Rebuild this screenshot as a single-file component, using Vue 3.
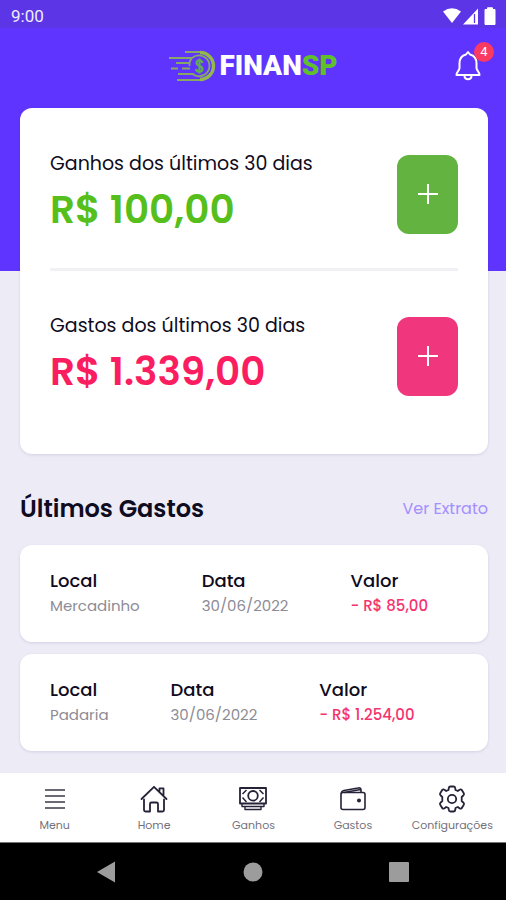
<script setup>
const totals = [
  { id: 'ganhos', label: 'Ganhos dos últimos 30 dias', amount: 'R$ 100,00', kind: 'income', action: 'Adicionar ganho' },
  { id: 'gastos', label: 'Gastos dos últimos 30 dias', amount: 'R$ 1.339,00', kind: 'expense', action: 'Adicionar gasto' },
]

const expenses = [
  { place: 'Mercadinho', date: '30/06/2022', value: '- R$ 85,00' },
  { place: 'Padaria', date: '30/06/2022', value: '- R$ 1.254,00' },
]
</script>

<template>
  <div class="screen">
    <div class="status-bar">
      <span class="clock">9:00</span>
      <svg class="status-icons" viewBox="0 0 56 18" aria-hidden="true">
        <path d="M1 4.500Q10 -2 19 4.500L10 16Z" fill="#fff" />
        <path d="M21 17.500L36 1.500V17.500Z" fill="#fff" />
        <path d="M32.500 7V16" stroke="#5c35e6" stroke-width="1.300" />
        <path d="M45.500 2.500V0.800H50.500V2.500H53V17.500H43V2.500Z" fill="#fff" stroke="#fff" stroke-linejoin="round" />
      </svg>
    </div>

    <header class="top-bar">
      <div class="brand">
        <svg class="coin" viewBox="0 0 48 32" fill="none" stroke="#86a765" stroke-width="1.800" aria-hidden="true">
          <path d="M17 2H33M1 8H24M8 13H22M3 18.500H10M14 18.500H22M10 24H26M9 30H33" />
          <path d="M32 2.500A13.500 13.500 0 0 1 32 29.500" stroke="#93b84d" stroke-width="3.400" />
          <path d="M24 8A10.500 10.500 0 1 1 24.500 24" />
          <path d="M24 8Q21 11 21.500 16" />
          <path d="M34.500 13C34 9.500 28.500 9.500 28.500 12.800C28.500 16.300 34.500 15.300 34.500 19C34.500 22.500 28.500 22.500 28 19M31.500 8.500V23.500" stroke="#62ad50" stroke-width="2.200" />
        </svg>
        <span class="brand-name">FINAN<span class="brand-accent">SP</span></span>
      </div>
      <button class="bell" type="button" aria-label="Notificações">
        <svg viewBox="0 0 28 32" fill="none" stroke="#fff" stroke-width="2" stroke-linejoin="round" stroke-linecap="round" aria-hidden="true">
          <path d="M14 2L12 4.500C8 5.500 5.500 9 5.500 13.500V18C5.500 20.500 2.500 22 2.500 25H25.500C25.500 22 22.500 20.500 22.500 18V13.500C22.500 9 20 5.500 16 4.500Z" />
          <path d="M10.500 25.500C10.500 30.500 17.500 30.500 17.500 25.500" />
        </svg>
        <span class="badge">4</span>
      </button>
    </header>

    <main class="content">
      <section class="card summary">
        <div v-for="total in totals" :key="total.id" class="total" :class="total.kind">
          <div>
            <p class="total-label">{{ total.label }}</p>
            <p class="total-amount">{{ total.amount }}</p>
          </div>
          <button class="add" type="button" :aria-label="total.action">
            <svg viewBox="0 0 22 22" stroke="#fff" stroke-width="2" aria-hidden="true">
              <path d="M11 1V21M1 11H21" />
            </svg>
          </button>
        </div>
      </section>

      <div class="section-head">
        <h2>Últimos Gastos</h2>
        <a href="#extrato">Ver Extrato</a>
      </div>

      <ul class="expenses">
        <li v-for="expense in expenses" :key="expense.place" class="card">
          <dl class="expense-row">
            <div>
              <dt>Local</dt>
              <dd>{{ expense.place }}</dd>
            </div>
            <div>
              <dt>Data</dt>
              <dd>{{ expense.date }}</dd>
            </div>
            <div>
              <dt>Valor</dt>
              <dd class="negative">{{ expense.value }}</dd>
            </div>
          </dl>
        </li>
      </ul>
    </main>

    <nav class="tabs">
      <a href="#menu">
        <svg viewBox="0 0 28 28" fill="none" stroke="#6b6974" stroke-width="2" aria-hidden="true">
          <path d="M4 5H24M4 11H24M4 17H24M4 23H24" />
        </svg>
        Menu
      </a>
      <a href="#home">
        <svg viewBox="0 0 28 28" fill="none" stroke="#252238" stroke-width="1.800" stroke-linejoin="round" stroke-linecap="round" aria-hidden="true">
          <path d="M4 14.500V25Q4 26.500 5.500 26.500H10V19Q10 17.500 11.500 17.500H16.500Q18 17.500 18 19V26.500H22.500Q24 26.500 24 25V14.500" />
          <path d="M1.500 14L14 1.800L26.500 14M19.500 6V3.300H23.500V10" />
        </svg>
        Home
      </a>
      <a href="#ganhos">
        <svg viewBox="0 0 28 28" fill="none" stroke="#252238" stroke-width="1.800" stroke-linejoin="round" aria-hidden="true">
          <rect x="1" y="3" width="26" height="15.500" />
          <circle cx="14" cy="10.800" r="4.800" />
          <path d="M3.500 9L7.500 5M20.500 5L24.500 9M3.500 12.500L7.500 17M20.500 17L24.500 12.500" stroke-width="1.500" />
          <path d="M3 19V21.500H25V19M6 22V24.500H22V22" stroke-width="1.400" />
        </svg>
        Ganhos
      </a>
      <a href="#gastos">
        <svg viewBox="0 0 28 28" fill="none" stroke="#252238" stroke-width="1.600" stroke-linejoin="round" aria-hidden="true">
          <rect x="2" y="7.500" width="24" height="17" rx="2" />
          <path d="M2.300 8.500Q2.500 6 5 5.500L19 3Q22 2.300 22 5V7.500M5 7.500L21.500 4.500" />
          <circle cx="20" cy="15.500" r="1.200" fill="#252238" />
        </svg>
        Gastos
      </a>
      <a href="#configuracoes">
        <svg viewBox="0 0 28 28" fill="none" stroke="#252238" stroke-width="1.800" stroke-linejoin="round" aria-hidden="true">
          <circle cx="14" cy="14" r="4.200" />
          <path d="M12.500 1.500H15.500Q17 1.500 17.200 3L17.500 5L19.800 6L21.500 4.800Q22.800 4 23.800 5L25.800 8.300Q26.500 9.600 25.300 10.500L23.700 12V16L25.300 17.500Q26.500 18.400 25.800 19.700L23.800 23Q22.800 24 21.500 23.200L19.800 22L17.500 23L17.200 25Q17 26.500 15.500 26.500H12.500Q11 26.500 10.800 25L10.500 23L8.200 22L6.500 23.200Q5.200 24 4.200 23L2.200 19.700Q1.500 18.400 2.700 17.500L4.300 16V12L2.700 10.500Q1.500 9.600 2.200 8.300L4.200 5Q5.200 4 6.500 4.800L8.200 6L10.500 5L10.800 3Q11 1.500 12.500 1.500Z" />
        </svg>
        Configurações
      </a>
    </nav>

    <div class="system-bar">
      <button type="button" aria-label="Voltar">
        <svg viewBox="0 0 22 22" aria-hidden="true"><path d="M2 11L20 0.500V21.500Z" fill="#9c9c9c" /></svg>
      </button>
      <button type="button" aria-label="Início">
        <svg viewBox="0 0 22 22" aria-hidden="true"><circle cx="11" cy="11" r="9.500" fill="#9c9c9c" /></svg>
      </button>
      <button type="button" aria-label="Recentes">
        <svg viewBox="0 0 22 22" aria-hidden="true"><rect x="1" y="1" width="20" height="20" rx="1" fill="#9c9c9c" /></svg>
      </button>
    </div>
  </div>
</template>

<style>
body {
  margin: 0;
  background: #ecebf6;
}
</style>

<style scoped>
.screen {
  display: flex;
  flex-direction: column;
  min-height: 100vh;
  color: #0f0b20;
  background: #ecebf6;
  font-family: Poppins, Inter, sans-serif;
}

p,
h2,
ul,
dl,
dd {
  margin: 0;
  padding: 0;
}

button {
  padding: 0;
  border: 0;
  background: none;
  cursor: pointer;
}

a {
  text-decoration: none;
}

svg {
  display: block;
}

.status-bar {
  display: flex;
  align-items: center;
  justify-content: space-between;
  height: 28px;
  padding: 3px 8px 0 11px;
  box-sizing: border-box;
  background: #5c35e6;
}

.clock {
  color: #f0ecff;
  font: 17px/24px Roboto, sans-serif;
}

.status-icons {
  width: 56px;
  height: 18px;
}

.top-bar {
  display: grid;
  grid-template-columns: 1fr auto 1fr;
  align-items: center;
  height: 80px;
  padding: 0 24px 4px;
  box-sizing: border-box;
  background: #6034ff;
}

.brand {
  display: flex;
  grid-column: 2;
  align-items: center;
  gap: 3px;
}

.coin {
  width: 48px;
  height: 32px;
}

.brand-name {
  color: #fff;
  font: 900 28px/32px Roboto, sans-serif;
}

.brand-accent {
  color: #5fc02a;
}

.bell {
  position: relative;
  justify-self: end;
}

.bell svg {
  width: 28px;
  height: 32px;
}

.badge {
  position: absolute;
  top: -8px;
  right: -12px;
  width: 20px;
  height: 20px;
  border-radius: 50%;
  color: #fff;
  background: #fb3a62;
  font: 13px/20px Roboto, sans-serif;
  text-align: center;
}

.content {
  flex: 1;
  padding: 0 18px 22px 20px;
  background: linear-gradient(#6034ff 163px, transparent 163px);
}

.card {
  border-radius: 12px;
  background: #fff;
  box-shadow: 0 1px 3px rgba(40, 30, 80, 0.12);
}

.summary {
  padding: 42px 30px 54px;
}

.total {
  display: flex;
  align-items: center;
  justify-content: space-between;
}

.total + .total {
  margin-top: 30px;
  padding-top: 41px;
  border-top: 3px solid #f1f0f5;
}

.total-label {
  margin-bottom: 4px;
  font-size: 19px;
  line-height: 28px;
}

.total-amount {
  font-size: 39px;
  font-weight: 600;
  line-height: 56px;
}

.income .total-amount {
  color: #56bf1b;
}

.expense .total-amount {
  color: #fa1d5f;
}

.add {
  display: grid;
  place-items: center;
  width: 61px;
  height: 79px;
  border-radius: 12px;
}

.add svg {
  width: 22px;
  height: 22px;
}

.income .add {
  background: #63b340;
}

.expense .add {
  background: #f0367d;
}

.section-head {
  display: flex;
  align-items: center;
  justify-content: space-between;
  padding: 37px 0 18px;
}

h2 {
  font-size: 24px;
  font-weight: 600;
  line-height: 36px;
}

.section-head a {
  color: #a48fff;
  font-size: 16px;
  line-height: 24px;
}

.expenses {
  display: grid;
  gap: 12px;
  list-style: none;
}

.expense-row {
  display: flex;
  gap: 62px;
  padding: 23px 30px 24px;
}

dt {
  font-size: 18px;
  font-weight: 500;
  line-height: 26px;
}

dd {
  color: #8d8b95;
  font-size: 15px;
  line-height: 24px;
}

dd.negative {
  color: #f5346f;
  font-weight: 500;
}

.tabs {
  display: grid;
  grid-template-columns: repeat(5, 1fr);
  height: 69px;
  padding: 12px 4px 0 5px;
  box-sizing: border-box;
  background: #fff;
}

.tabs a {
  display: flex;
  flex-direction: column;
  align-items: center;
  gap: 4px;
  color: #73717c;
  font-size: 11px;
  line-height: 16px;
}

.tabs svg {
  width: 28px;
  height: 28px;
}

.system-bar {
  display: flex;
  align-items: center;
  justify-content: space-between;
  height: 58px;
  padding: 0 96px 0 95px;
  box-sizing: border-box;
  border-top: 1px solid #777;
  background: #000;
}

.system-bar svg {
  width: 22px;
  height: 22px;
}
</style>
